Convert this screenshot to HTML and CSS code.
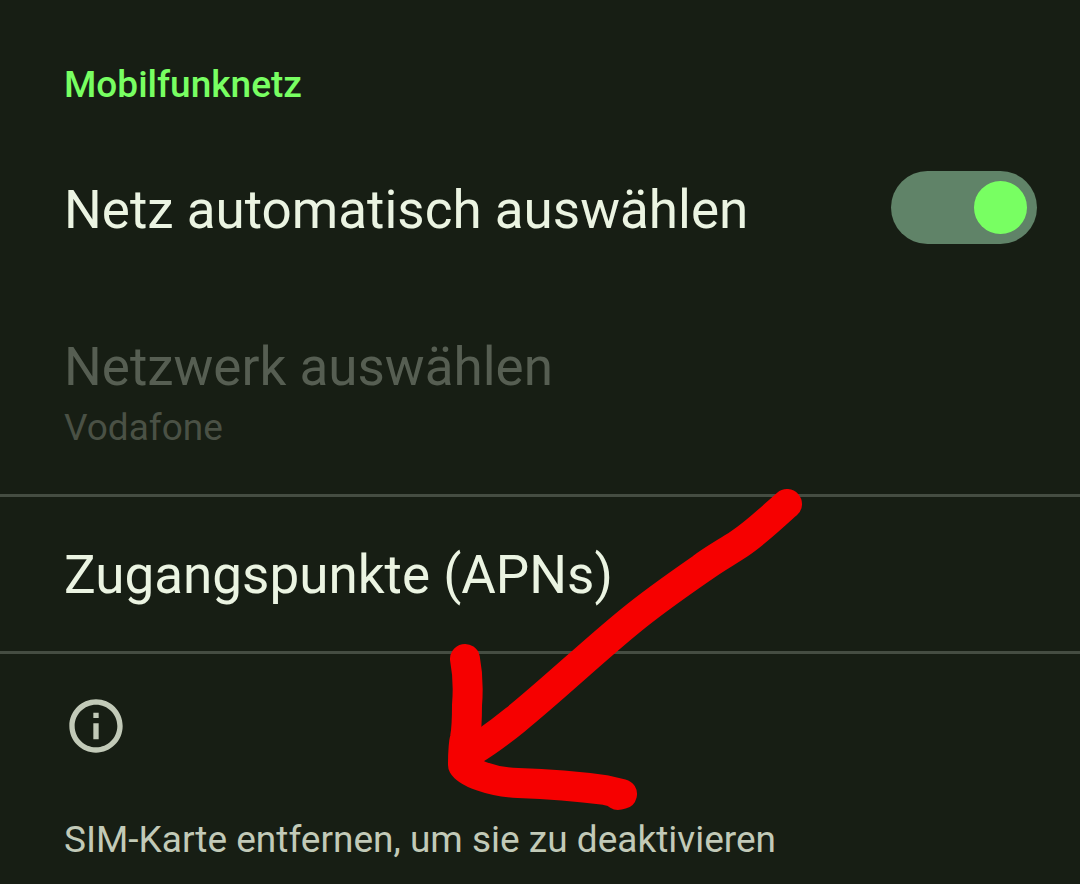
FILE: index.html
```html
<!DOCTYPE html>
<html lang="de">
<head>
    <meta charset="UTF-8">
    <meta name="viewport" content="width=device-width, initial-scale=1.0">
    <title>Mobilfunknetz</title>
    <link rel="stylesheet" href="styles.css">
</head>
<body>
    <main class="settings">
        <h2 class="category">Mobilfunknetz</h2>

        <div class="row">
            <label class="title" for="autoNetwork">Netz automatisch auswählen</label>
            <input class="switch" type="checkbox" role="switch" id="autoNetwork" checked>
        </div>

        <button class="row entry" type="button" disabled>
            <span class="title">Netzwerk auswählen</span>
            <span class="summary">Vodafone</span>
        </button>

        <a class="row apn" href="#apn">
            <span class="title">Zugangspunkte (APNs)</span>
        </a>

        <footer class="info">
            <svg class="info-icon" viewBox="0 0 24 24" aria-hidden="true">
                <path d="M11 7h2v2h-2zm0 4h2v6h-2zm1-9C6.480 2 2 6.480 2 12s4.480 10 10 10 10-4.480 10-10S17.520 2 12 2zm0 18c-4.410 0-8-3.590-8-8s3.590-8 8-8 8 3.590 8 8-3.590 8-8 8z"/>
            </svg>
            <p class="note">SIM-Karte entfernen, um sie zu deaktivieren</p>
        </footer>

        <!-- hand-drawn arrow on top of the list -->
        <svg class="arrow" viewBox="440 480 210 340" aria-hidden="true">
            <path d="M787 504C772 517 757 532 739 544C727 552 714 559 702 568C676 586 653 602 630 621C592 652 552 690 515 720C499 733 483 745 465 755"/>
            <path d="M465 659C468 675 468 693 467 705C467 720 467 728 465 738C463 746 463 752 463 765C467 772 490 782 518 783C548 784 575 786 605 790L622 794L618 795"/>
        </svg>
    </main>
</body>
</html>
```

FILE: styles.css
```css
body {
    font-family: Roboto, sans-serif;
    margin: 0;
    background-color: #171e14;
    color: #ebf4e2;
}

.settings {
    position: relative;
    padding-top: 63px;
}

.category {
    margin: 0 0 26px;
    padding: 0 64px;
    font-size: 37px;
    line-height: 43px;
    font-weight: 500;
    color: #78ff62;
}

.row {
    display: flex;
    align-items: flex-start;
    justify-content: space-between;
    box-sizing: border-box;
    width: 100%;
    padding: 47px 43px 45px 64px;
    color: inherit;
    text-decoration: none;
}

.title {
    font-size: 53px;
    line-height: 62px;
}

.switch {
    appearance: none;
    display: flex;
    justify-content: flex-end;
    box-sizing: border-box;
    width: 146px;
    height: 73px;
    margin: -8px 0;
    padding: 10px;
    border-radius: 37px;
    background-color: #608368;
}

.switch::before {
    content: "";
    width: 53px;
    height: 53px;
    border-radius: 50%;
    background-color: #78ff62;
}

.switch:not(:checked) {
    justify-content: flex-start;
}

.entry {
    flex-direction: column;
    gap: 8px;
    padding-top: 50px;
    border: none;
    background: none;
    font-family: inherit;
    color: #565e52;
}

.summary {
    font-size: 37px;
    line-height: 43px;
    color: #4a5145;
}

.apn {
    border-top: 3px solid #454d42;
    border-bottom: 3px solid #454d42;
}

.info {
    padding: 40px 64px 23px;
}

.info-icon {
    display: block;
    width: 64px;
    height: 64px;
    margin-bottom: 60px;
    fill: #c2cab8;
}

.note {
    margin: 0;
    font-size: 37px;
    line-height: 43px;
    color: #c2cab8;
}

.arrow {
    position: absolute;
    left: 440px;
    top: 480px;
    width: 210px;
    height: 340px;
    overflow: visible;
    pointer-events: none;
    fill: none;
    stroke: #f60000;
    stroke-width: 30px;
    stroke-linecap: round;
    stroke-linejoin: round;
}
```
